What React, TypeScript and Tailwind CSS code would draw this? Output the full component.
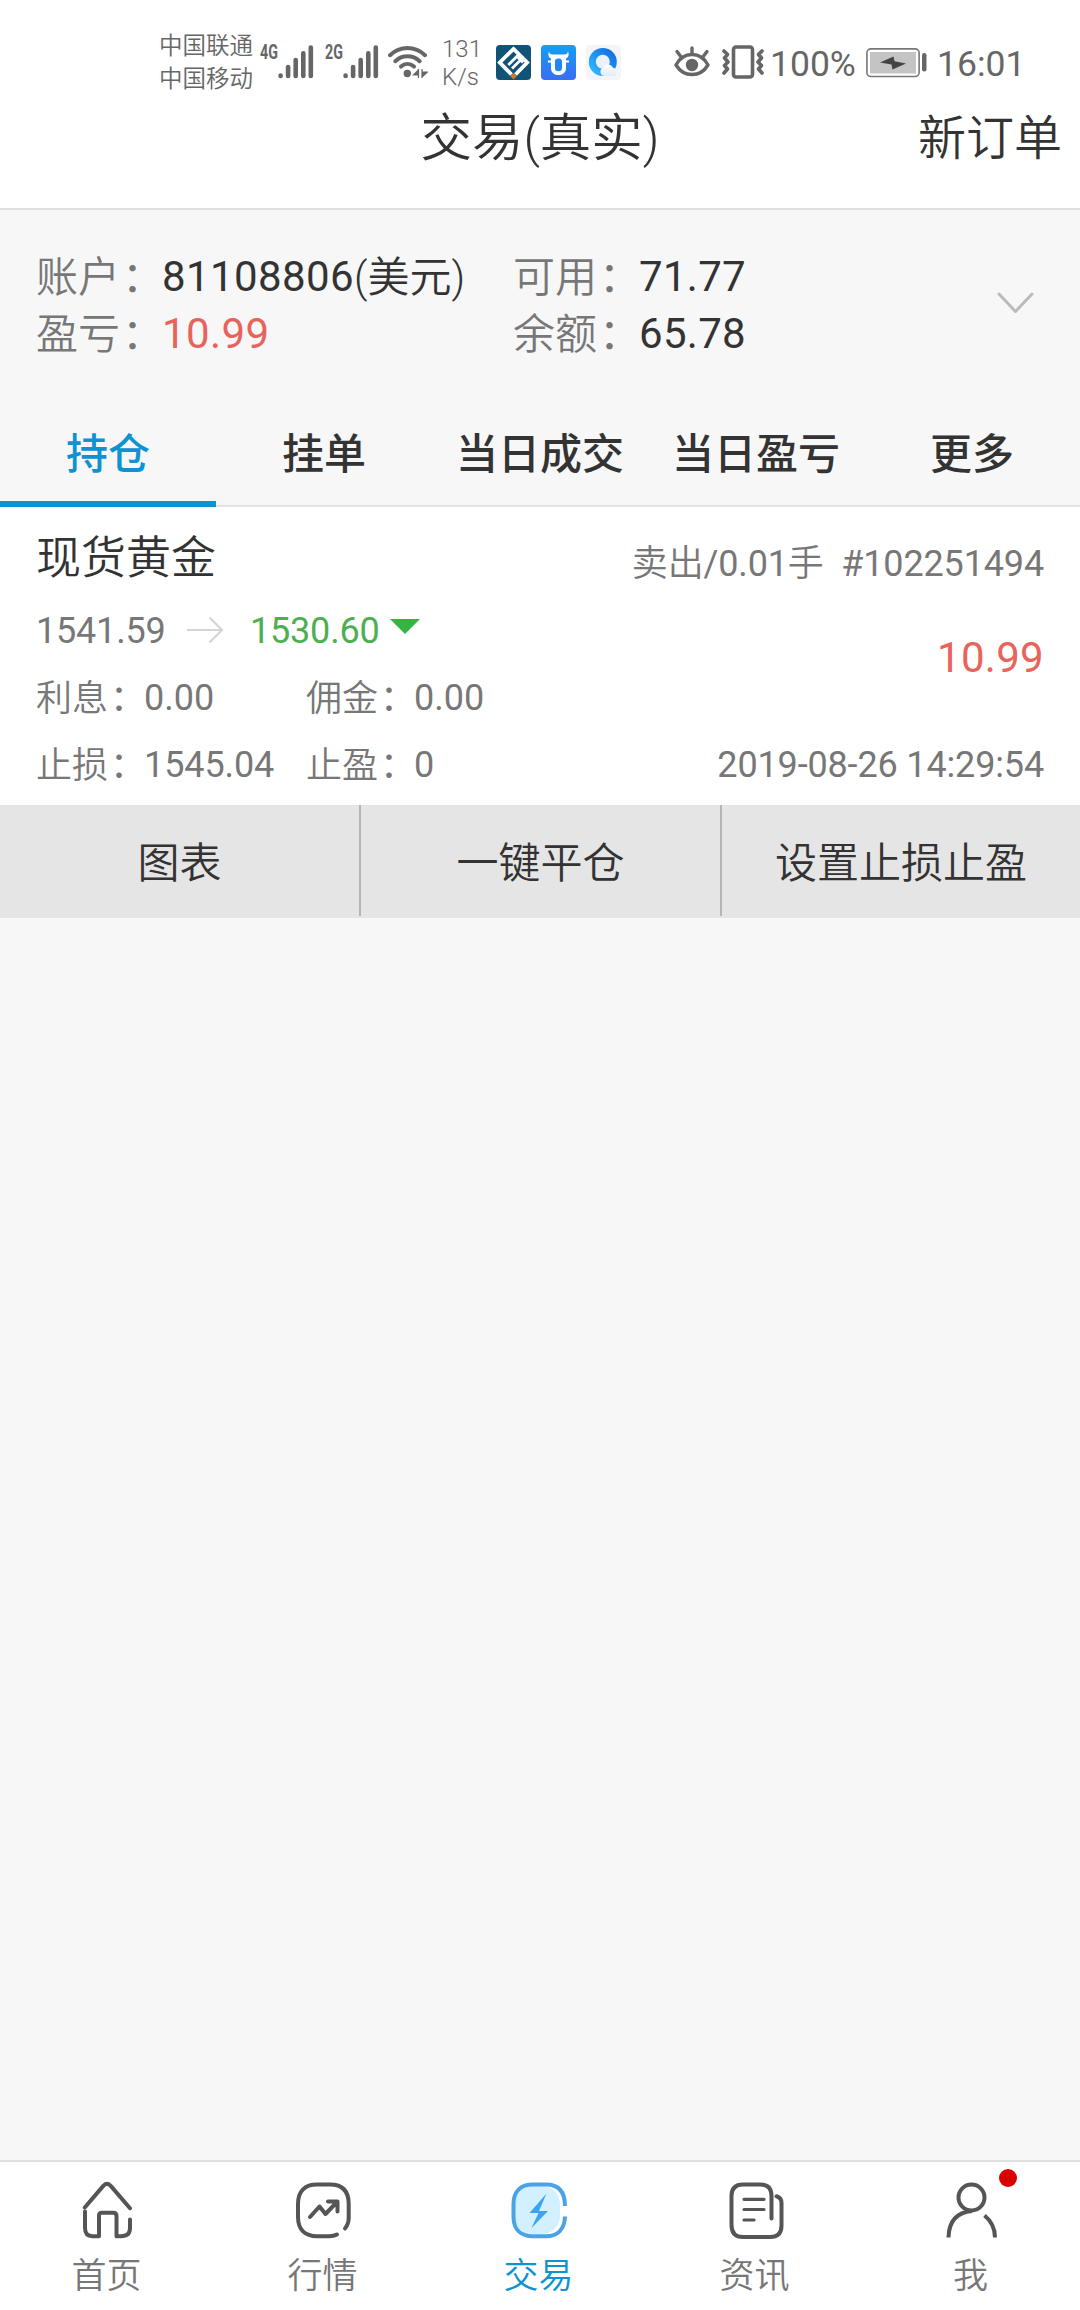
import React from "react";

function SignalBars() {
  return (
    <svg width="36" height="34" viewBox="0 0 36 34" className="block" fill="none" stroke="#666" strokeWidth="4.6" strokeLinecap="round">
      <path d="M2.6 30.6v.4M10.1 22v9M17.7 15v16M25.3 8.4v22.6M32.8 2.6v28.4" />
    </svg>
  );
}

function Signal({ label }: { label: string }) {
  return (
    <div className="flex w-[65px] items-start">
      <span className="block w-[18px] origin-left scale-x-[0.68] text-[21px] leading-[15px] font-bold whitespace-nowrap text-[#666]">
        {label}
      </span>
      <SignalBars />
    </div>
  );
}

function Wifi() {
  return (
    <svg width="40" height="34" viewBox="0 0 40 34" className="block" fill="none" stroke="#666" strokeWidth="4" strokeLinecap="round">
      <path d="M2 10.2C12 .6 27 .6 37 10.2" />
      <path d="M7.3 16.2c7-6.6 17.3-6.6 24.4 0" />
      <path d="M13 21.600c4-3.600 9-3.600 13 0" />
      <circle cx="19.3" cy="28.5" r="3.7" fill="#666" stroke="none" />
      <path d="M30.500 24v9M30.500 25l-5 5h5zM34 33v-9M34 32l5.500-5H34z" strokeWidth="1.2" strokeLinecap="butt" fill="#666" />
    </svg>
  );
}

function AppE() {
  return (
    <svg width="35" height="35" viewBox="0 0 35 35" className="block">
      <rect width="35" height="35" rx="4" fill="#115377" />
      <path d="M15.500 29.500 3.800 17.500 17.500 4 31.200 17.500 19.500 29.500" fill="none" stroke="#fff" strokeWidth="3.800" />
      <path d="M12.300 20 21.500 10.800M16 23.500l7.800-7.800M20 10.500l7 7" fill="none" stroke="#fff" strokeWidth="2.800" />
      <path d="m17.500 28 3.200 3.200-3.200 3.200-3.200-3.200z" fill="#d17a22" />
    </svg>
  );
}

function AppBull() {
  return (
    <svg width="35" height="35" viewBox="0 0 35 35" className="block">
      <defs>
        <linearGradient id="bull" x1="0" y1="0" x2="0" y2="1">
          <stop offset="0" stopColor="#12a0f4" />
          <stop offset="1" stopColor="#3a6cf2" />
        </linearGradient>
      </defs>
      <rect width="35" height="35" rx="4" fill="url(#bull)" />
      <path d="M8 6.500c.3 2 1.500 2.800 4 3h11c2.500-.2 3.700-1 4-3 1.400 3.400.3 6-2 7V23c0 4.300-2.800 7-7.500 7S10 27.300 10 23v-9.500c-2.300-1-3.400-3.600-2-7Z" fill="#fff" />
      <rect x="14" y="13.500" width="7" height="12.800" rx="3.300" fill="#2585f3" />
      <path d="M7 16.500h4M24 16.500h4" stroke="#fff" strokeWidth="2" />
    </svg>
  );
}

function AppBrowser() {
  return (
    <svg width="35" height="35" viewBox="0 0 35 35" className="block">
      <defs>
        <linearGradient id="ring" x1="0" y1="1" x2="1" y2="0">
          <stop offset="0" stopColor="#3dc4ff" />
          <stop offset="0.5" stopColor="#1e92f2" />
          <stop offset="1" stopColor="#1463dd" />
        </linearGradient>
        <linearGradient id="cloud" x1="0" y1="0" x2="0" y2="1">
          <stop offset="0" stopColor="#ffffff" />
          <stop offset="1" stopColor="#e2ebf8" />
        </linearGradient>
      </defs>
      <rect width="35" height="35" rx="4" fill="#f3f5fa" />
      <circle cx="16.800" cy="17" r="14" fill="url(#ring)" />
      <circle cx="16.800" cy="16.800" r="7" fill="#eaf1fc" />
      <path d="M18 31a4.200 4.200 0 0 1-.5-8.200c.6-2.400 2.800-3.800 5.200-3.400 2.100.3 3.600 1.600 4.200 3.400 2.200.2 4 2 4 4.100 0 2.300-1.900 4.100-4.200 4.100z" fill="url(#cloud)" />
    </svg>
  );
}

function Eye() {
  return (
    <svg width="36" height="33" viewBox="0 0 36 33" className="block" fill="none" stroke="#666" strokeWidth="3.4" strokeLinecap="round" strokeLinejoin="round">
      <path d="M2 20C6 12.500 11.500 9.500 18 9.500S30 12.500 34 20c-4 6.500-9.500 9.500-16 9.500S6 26.500 2 20Z" />
      <path d="M18 9V3M7.500 12.500 3 6.500M28.500 12.500 33 6.500" />
      <circle cx="18" cy="20" r="6.2" fill="#666" stroke="none" />
    </svg>
  );
}

function Vibrate() {
  return (
    <svg width="42" height="34" viewBox="0 0 42 34" className="block" fill="none" stroke="#666" strokeWidth="3.6" strokeLinejoin="round" strokeLinecap="round">
      <rect x="11.500" y="2" width="19" height="30" rx="2.500" />
      <path d="m2 6 3.500 3.500L2.500 13l3.500 4-3.500 3.500 3 3.500L2 28M40 6l-3.500 3.500 3 3.500-3.500 4 3.500 3.500-3 3.500L40 28" />
    </svg>
  );
}

function Battery() {
  return (
    <svg width="61" height="30" viewBox="0 0 61 30" className="block">
      <rect x="0.9" y="0.9" width="52.2" height="27.6" rx="4" fill="#fff" stroke="#777" strokeWidth="1.6" />
      <rect x="4" y="4" width="46" height="21.5" fill="#c4c4c4" />
      <path d="M14 14.500 27.500 8.500l1 4.800L40 15.500l-13.500 6-1-5z" fill="#444" />
      <rect x="56" y="5" width="4.500" height="18.500" rx="2.200" fill="#666" />
    </svg>
  );
}

function StatusBar() {
  return (
    <div className="flex h-[110px] items-start pt-[45px] pl-[159px] text-[#666]">
      <div className="-mt-[15px] w-[101px] text-[23.5px] leading-[33px] font-[350]">
        <div>中国联通</div>
        <div>中国移动</div>
      </div>
      <Signal label="4G" />
      <Signal label="2G" />
      <div className="-ml-[2px] w-[54px]">
        <Wifi />
      </div>
      <div className="-mt-[10px] w-[54px] text-[24px] leading-[28px] font-[350]">
        <div>131</div>
        <div>K/s</div>
      </div>
      <div className="flex w-[178px] gap-[10px]">
        <AppE />
        <AppBull />
        <AppBrowser />
      </div>
      <div className="w-[48px]">
        <Eye />
      </div>
      <Vibrate />
      <span className="ml-[6px] w-[96px] text-[35.5px] leading-[38px]">100%</span>
      <div className="mt-[3px] w-[71px]">
        <Battery />
      </div>
      <span className="text-[35.5px] leading-[38px]">16:01</span>
    </div>
  );
}

function Header() {
  return (
    <div className="grid h-[100px] grid-cols-[1fr_auto_1fr] items-start border-b-2 border-[#e0e0e0] font-[350] text-[#333]">
      <span />
      <h1 className="text-[51.5px] leading-[58px]">交易(真实)</h1>
      <span className="pr-[18px] text-right text-[48px] leading-[57px]">新订单</span>
    </div>
  );
}

type FieldProps = { label: string; value: string; unit?: string; tone?: string };

function Field({ label, value, unit, tone = "" }: FieldProps) {
  return (
    <div className="whitespace-nowrap">
      <span className="relative top-px font-[350] text-[#777]">
        {label}
        <span className="relative left-[2px] font-normal">：</span>
      </span>
      <span className={tone}>{value}</span>
      {unit && <span className="relative top-px font-[350]">{unit}</span>}
    </div>
  );
}

function Account() {
  return (
    <section className="flex h-[193px] pt-[38px] pl-[36px] text-[42px] leading-[57px] text-[#333]">
      <div className="w-[477px]">
        <Field label="账户" value="81108806" unit="(美元)" tone="tracking-[0.4px]" />
        <Field label="盈亏" value="10.99" tone="tracking-[0.4px] text-[#e8635c]" />
      </div>
      <div className="w-[483px]">
        <Field label="可用" value="71.77" tone="tracking-[0.3px]" />
        <Field label="余额" value="65.78" tone="tracking-[0.3px]" />
      </div>
      <svg width="40" height="26" viewBox="0 0 40 26" className="mt-[42px] block" fill="none" stroke="#bbb" strokeWidth="3" strokeLinecap="round" strokeLinejoin="round">
        <path d="m3 4 16.500 17.500L36 4" />
      </svg>
    </section>
  );
}

const tabs = ["持仓", "挂单", "当日成交", "当日盈亏", "更多"];

function Tabs() {
  return (
    <nav className="grid h-[104px] grid-cols-5 text-center text-[42px] leading-[104px] font-medium text-[#333]">
      {tabs.map((t, i) => (
        <div
          key={t}
          className={
            i === 0
              ? "h-[104px] border-b-[6px] border-[#0d92d2] text-[#0d92d2]"
              : "h-[104px] border-b-2 border-[#e3e3e3]"
          }
        >
          {t}
        </div>
      ))}
    </nav>
  );
}

function Position() {
  return (
    <section className="flex h-[298px] justify-between bg-white px-[36px] text-[36px] leading-[67px] text-[#777]">
      <div>
        <h2 className="mb-[6px] pt-[19px] text-[45px] leading-[66px] font-[350] text-[#333]">现货黄金</h2>
        <div className="flex items-center">
          <span className="w-[150px] tracking-[-0.2px]">1541.59</span>
          <svg width="38" height="28" viewBox="0 0 38 28" className="-mt-[3px] block" fill="none" stroke="#d5d5d5" strokeWidth="2.2">
            <path d="M1 14h35M23.500 1.500 36 14 23.500 26.500" />
          </svg>
          <span className="ml-[26px] w-[140px] tracking-[-0.2px] text-[#4caf50]">1530.60</span>
          <svg width="30" height="15" viewBox="0 0 30 15" className="-mt-[10px] block">
            <path d="M0 0h30L15 15z" fill="#33b540" />
          </svg>
        </div>
        <div className="grid grid-cols-[270px_auto]">
          <Field label="利息" value="0.00" />
          <Field label="佣金" value="0.00" />
          <Field label="止损" value="1545.04" tone="tracking-[-0.1px]" />
          <Field label="止盈" value="0" />
        </div>
      </div>
      <div className="pt-[24px] text-right tracking-[-0.15px] whitespace-pre">
        <div>
          <span className="font-[350]">卖出</span>/0.01<span className="font-[350]">手</span>{"  #102251494"}
        </div>
        <div className="mt-[26px] mb-[41px] text-[42px] tracking-[0.3px] text-[#e8635c]">10.99</div>
        <div>2019-08-26 14:29:54</div>
      </div>
    </section>
  );
}

function Actions() {
  return (
    <div className="grid h-[113px] grid-cols-[359px_361px_360px] bg-[#e5e5e5] text-center text-[42px] leading-[117px] font-[350] text-[#333]">
      <div className="h-[111px]">图表</div>
      <div className="h-[111px] border-l-2 border-[#b5b5b5]">一键平仓</div>
      <div className="h-[111px] border-l-2 border-[#b5b5b5]">设置止损止盈</div>
    </div>
  );
}

const iconProps = {
  width: 60,
  height: 60,
  viewBox: "0 0 60 60",
  fill: "none",
  stroke: "#555",
  strokeWidth: 4,
  strokeLinecap: "round" as const,
  strokeLinejoin: "round" as const,
  className: "block",
};

function HomeIcon() {
  return (
    <svg {...iconProps}>
      <path d="M6.800 27.500 25.500 5.600Q29 2.300 32.500 5.600L52 28.300M7 31.500V48Q7 56.200 14.500 56.200H21V35.500Q21 32.800 24 32.800H35Q38.500 32.800 38.500 36V56.200H43Q52 56.200 52 48V39.500" />
    </svg>
  );
}

function MarketIcon() {
  return (
    <svg {...iconProps}>
      <path d="M51 48.500Q54.700 44 54.700 38V24C54.700 11 48 4.500 36 4.500H23C11 4.500 4 11 4 24V37C4 49.500 11 56.200 23 56.200H35Q40 56.200 43 54.500" />
      <path d="M16 37 25.500 26.500 31.500 34 42.500 22.500M34 21.500H43.500V31.500" />
    </svg>
  );
}

function TradeIcon() {
  return (
    <svg {...iconProps} stroke="#4aa3e6">
      <rect x="4" y="6" width="46" height="48" rx="18" fill="#d2f0ff" stroke="none" />
      <path d="M55 26C55 11 48 4.500 36 4.500H23C11 4.500 3.500 11 3.500 24V37C3.500 49.500 11 56.200 23 56.200H36C48 56.200 54.500 49 55 36.500" strokeLinecap="butt" />
      <path d="M36.500 13.500 19.500 33h9L21.500 48 38 31h-9z" fill="#3ca4f3" stroke="none" />
    </svg>
  );
}

function NewsIcon() {
  return (
    <svg {...iconProps}>
      <path d="M45.500 38.500V16Q45.500 4.500 34 4.500H17Q5.500 4.500 5.500 16V45Q5.500 57 17 57H44Q55.500 57 55.500 45.500V23Q55.500 17.500 50.500 16.200" />
      <path d="M18 19.300h20M18 29.500h20M18 40h10" strokeWidth="3.2" />
    </svg>
  );
}

function MeIcon() {
  return (
    <svg {...iconProps} strokeLinecap="butt">
      <circle cx="29.500" cy="17.500" r="13" />
      <path d="M6.500 57.500Q7 33 30 31M42.500 35.500Q53 44 53 57.500" />
    </svg>
  );
}

const navItems = [
  { label: "首页", icon: <HomeIcon /> },
  { label: "行情", icon: <MarketIcon /> },
  { label: "交易", icon: <TradeIcon />, active: true },
  { label: "资讯", icon: <NewsIcon /> },
  { label: "我", icon: <MeIcon />, dot: true },
];

function BottomNav() {
  return (
    <nav className="grid h-[150px] grid-cols-5 border-t-2 border-[#e0e0e0] bg-white pt-[18px] text-[35px] font-[350] text-[#777]">
      {navItems.map((n) => (
        <div key={n.label} className={n.active ? "flex flex-col items-center text-[#0d92d2]" : "flex flex-col items-center"}>
          <div className="relative">
            {n.icon}
            {n.dot && <span className="absolute -top-[11px] left-[57px] size-[18px] rounded-full bg-[#d80000]" />}
          </div>
          <span className="mt-[11px] mr-[3px] leading-[51px]">{n.label}</span>
        </div>
      ))}
    </nav>
  );
}

export default function App() {
  return (
    <main className="flex h-[2310px] w-[1080px] flex-col overflow-hidden bg-[#f7f7f7] font-[Roboto,'Noto_Sans_CJK_SC',sans-serif]">
      <header className="bg-white">
        <StatusBar />
        <Header />
      </header>
      <Account />
      <Tabs />
      <Position />
      <Actions />
      <div className="grow" />
      <BottomNav />
    </main>
  );
}
